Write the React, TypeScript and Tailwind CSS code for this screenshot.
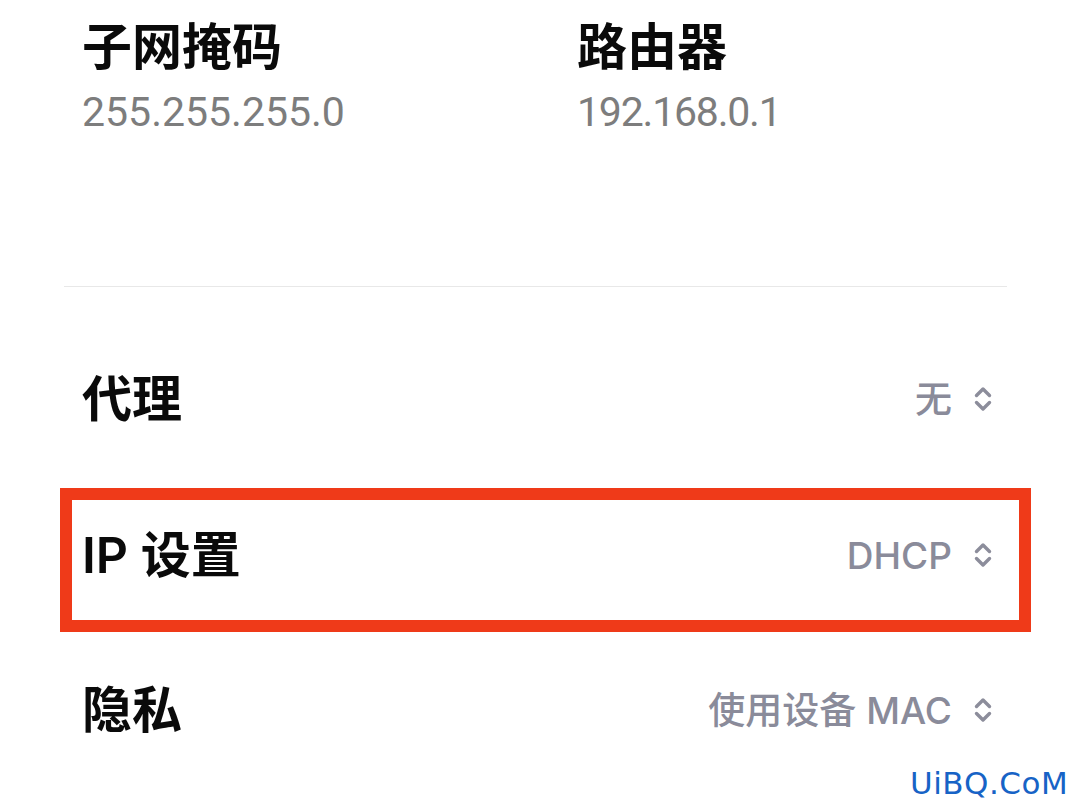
import React from "react";

const CJK = '"Noto Sans CJK SC", sans-serif';
const MIX = 'Inter, "Noto Sans CJK SC", sans-serif';

function Chevrons() {
  return (
    <svg width="22" height="30" viewBox="0 0 22 30" fill="none" className="shrink-0">
      <path d="M4.5 11.5 L11 5 L17.5 11.5" stroke="#8c8d9b" strokeWidth="3.4" strokeLinecap="round" strokeLinejoin="round" />
      <path d="M4.5 18.5 L11 25 L17.5 18.5" stroke="#8c8d9b" strokeWidth="3.4" strokeLinecap="round" strokeLinejoin="round" />
    </svg>
  );
}

function Row({ label, value }: { label: string; value: string }) {
  return (
    <div className="flex items-center justify-between h-[50px]">
      <div className="text-[50px] leading-none font-semibold text-[#0a0a0a]" style={{ fontFamily: MIX }}>
        {label}
      </div>
      <div className="flex items-center gap-[20px]">
        <span className="text-[37px] leading-none font-medium text-[#8a8b9a]" style={{ fontFamily: MIX }}>
          {value}
        </span>
        <Chevrons />
      </div>
    </div>
  );
}

export default function App() {
  return (
    <div className="relative w-[1080px] h-[810px] bg-white overflow-hidden">
      <div className="flex pt-[18px] pl-[82px]">
        <div className="w-[495px]">
          <div className="text-[50px] leading-none font-semibold text-[#0a0a0a]" style={{ fontFamily: CJK }}>
            子网掩码
          </div>
          <div className="mt-[24px] text-[41px] leading-none text-[#7d7d7d]" style={{ fontFamily: 'Roboto, sans-serif' }}>
            255.255.255.0
          </div>
        </div>
        <div>
          <div className="text-[50px] leading-none font-semibold text-[#0a0a0a]" style={{ fontFamily: CJK }}>
            路由器
          </div>
          <div className="mt-[24px] text-[41px] leading-none text-[#7d7d7d] tracking-[-1.2px]" style={{ fontFamily: 'Roboto, sans-serif' }}>
            192.168.0.1
          </div>
        </div>
      </div>

      <div className="ml-[64px] mt-[153px] w-[943px] h-px bg-[#e8e8e8]" />

      <div className="ml-[82px] mr-[86px] mt-[87px]">
        <Row label="代理" value="无" />
      </div>

      <div className="ml-[60px] mt-[64px] w-[971px] h-[144px] border-[12px] border-[#ef3a19] pl-[10px] pr-[25px] pt-[30px]">
        <Row label="IP 设置" value="DHCP" />
      </div>

      <div className="ml-[82px] mr-[86px] mt-[53px]">
        <Row label="隐私" value="使用设备 MAC" />
      </div>

      <div
        className="absolute left-[910px] top-[768px] text-[31px] leading-none text-[#1763c6] tracking-[0.5px]"
        style={{ fontFamily: '"DejaVu Sans", sans-serif' }}
      >
        UiBQ.CoM
      </div>
    </div>
  );
}
